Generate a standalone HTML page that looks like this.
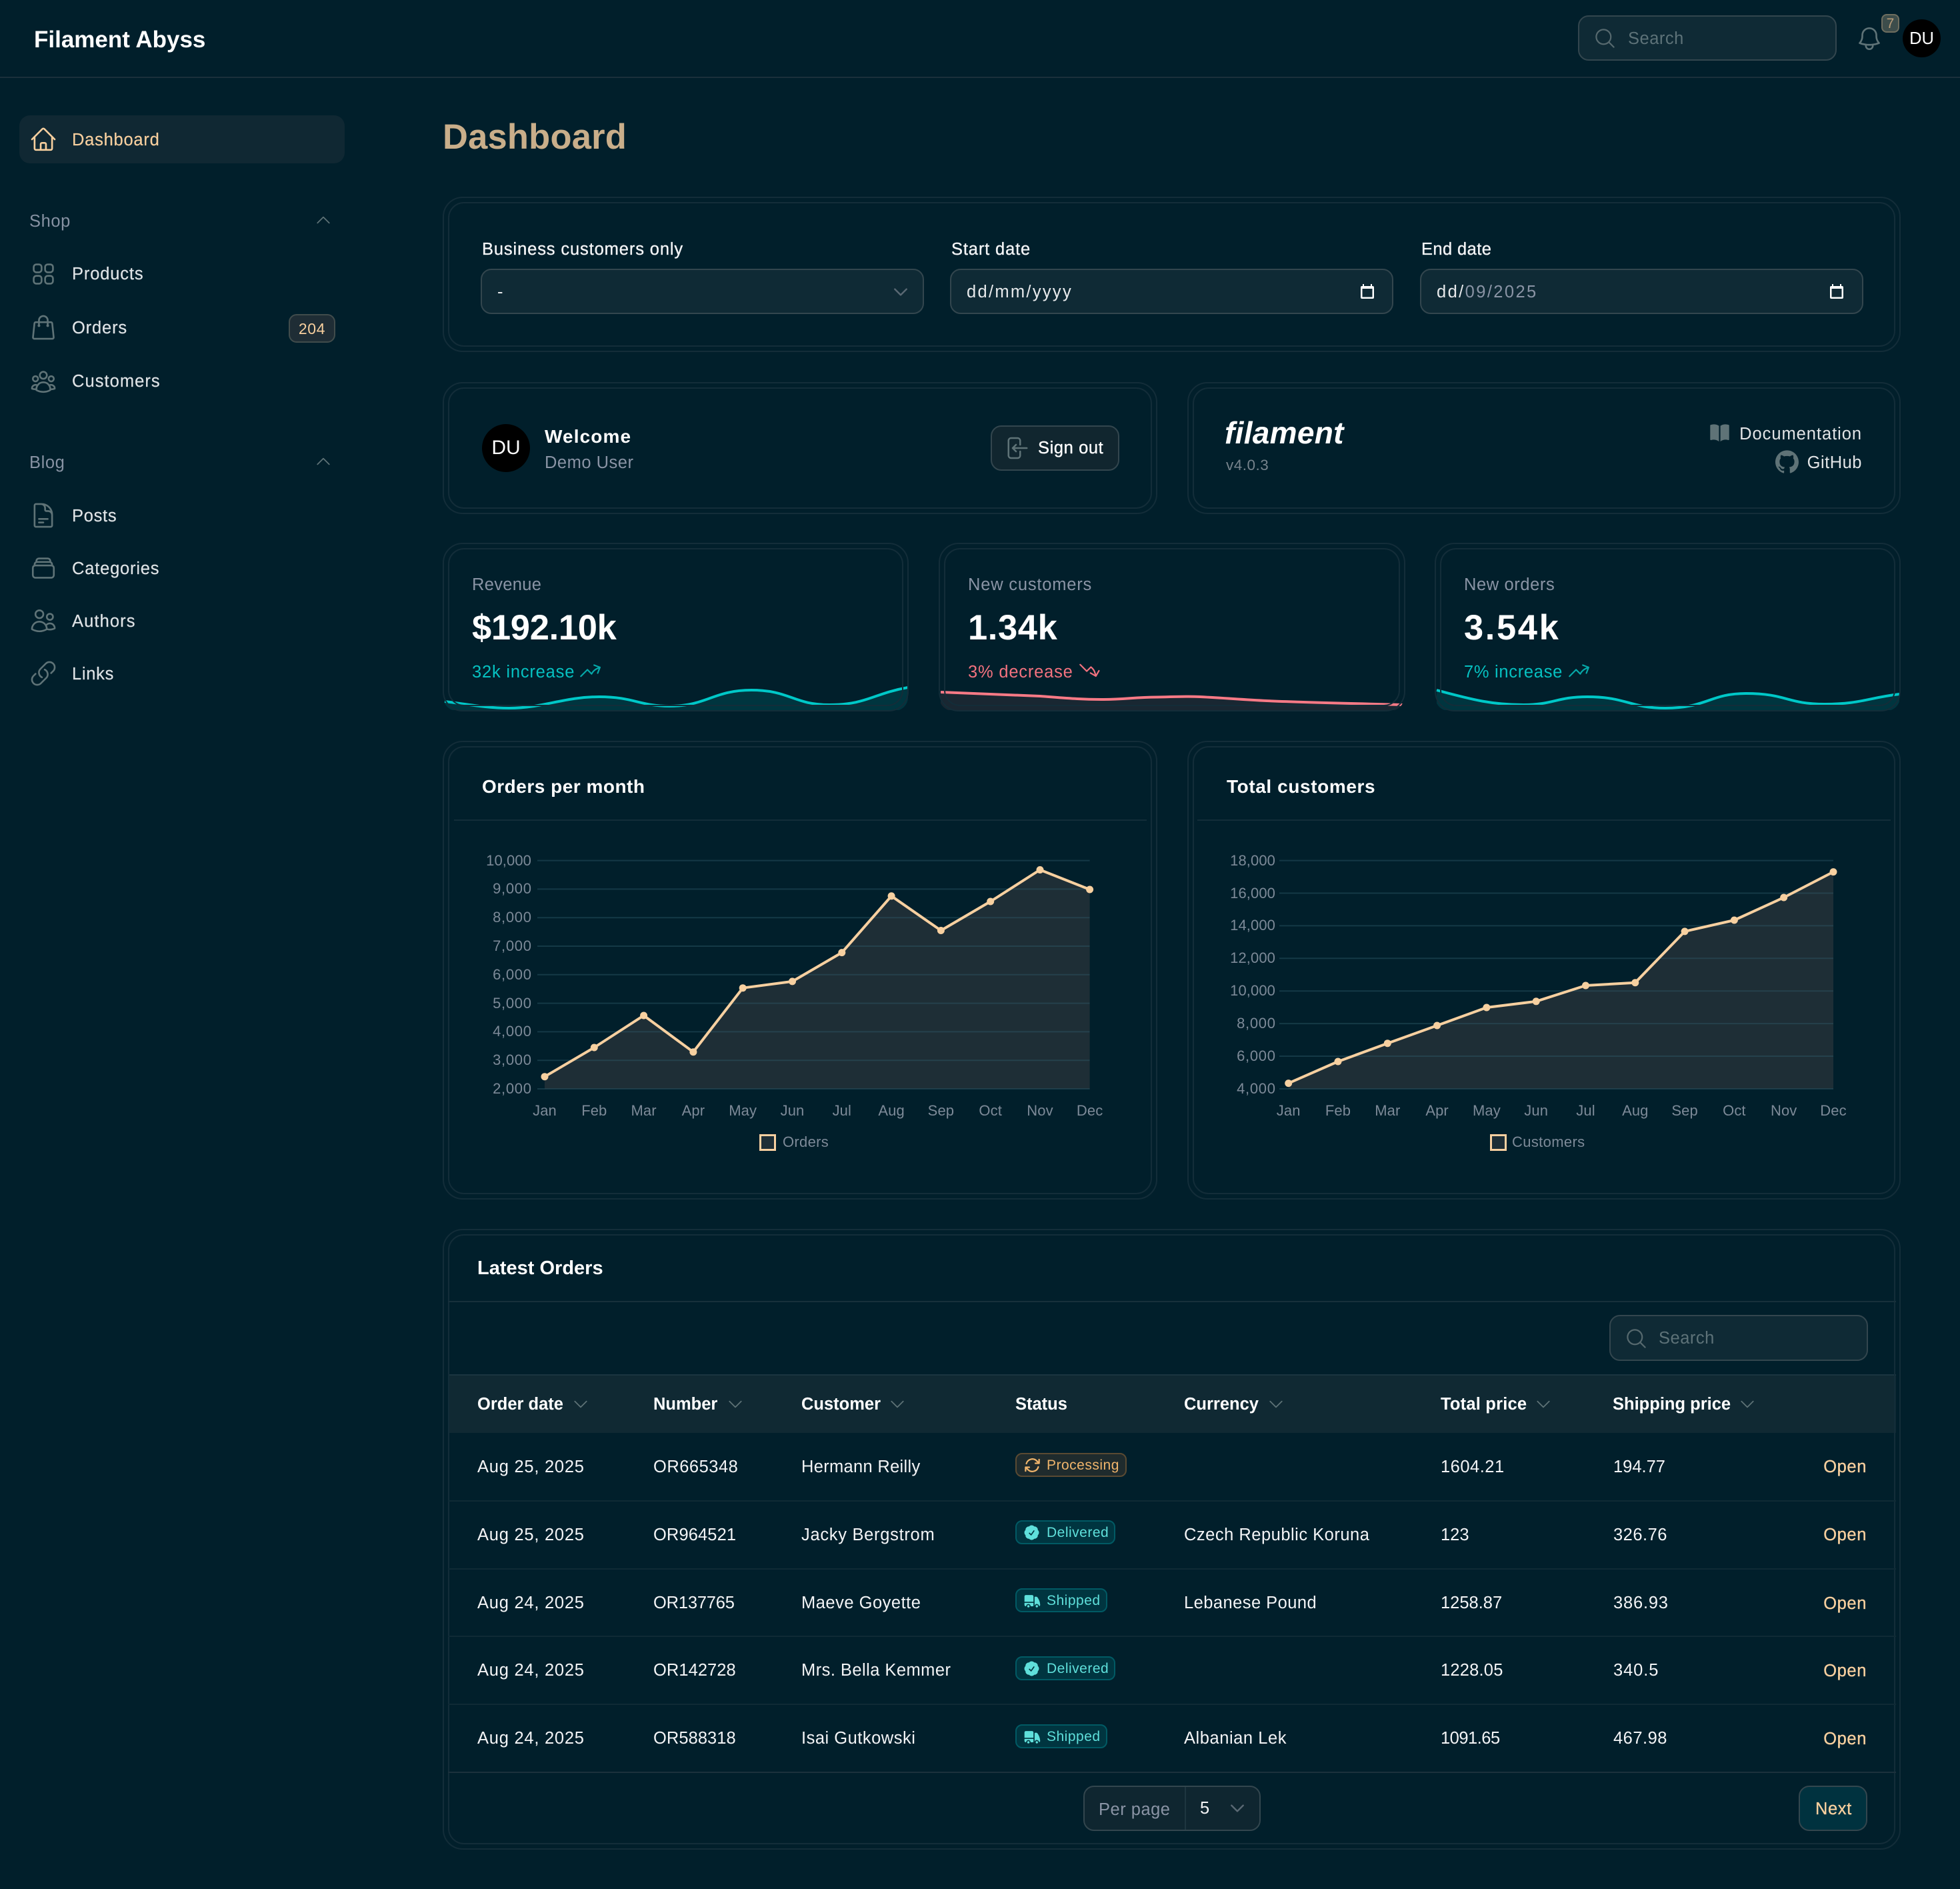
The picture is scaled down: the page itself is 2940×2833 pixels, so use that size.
<!DOCTYPE html>
<html lang="en"><head><meta charset="utf-8"><title>Dashboard - Filament Abyss</title>
<style>
*{box-sizing:border-box}
html,body{margin:0;padding:0;background:#011f2b}
body{position:relative;width:2940px;height:2833px;overflow:hidden;font-family:"Liberation Sans",Arial,sans-serif;color:#f3f4f6}
.t{position:absolute;line-height:0;white-space:nowrap;font-size:25.5px;letter-spacing:.5px;color:#f3f4f6;margin-top:1px}
.b{font-weight:700;letter-spacing:0;color:#fff}
.m{-webkit-text-stroke:.35px currentColor}
.nav{left:108px;color:#dfe3e6;letter-spacing:.85px;-webkit-text-stroke:.2px currentColor}
.sec{left:44px;color:#8792a3;letter-spacing:.6px}
.mut{color:#8a94a5}
.pe{color:#f7cf9e}
.ax{font-size:22px;letter-spacing:.1px;color:#7d8a98}
.ay{letter-spacing:.7px}
.rr{transform:translateX(-100%)}
.cc{transform:translateX(-50%)}
.box{position:absolute;border:2px solid #33464e;background:#0f2a35;border-radius:16px}
.card{position:absolute;border:2px solid #132d39;border-radius:30px}
.card i{position:absolute;inset:6px;border:2px solid #132d39;border-radius:24px;display:block}
.ln{position:absolute;height:2px;background:#16303b}
svg.ic{position:absolute;fill:none;stroke:#5f7377;stroke-width:1.5;stroke-linecap:round;stroke-linejoin:round;overflow:visible}
svg.sf{position:absolute;fill:#5f7377}
.bd{position:absolute;height:36px;border-radius:10px;border:2px solid #015a64;background:#003540}
.bt{left:1570px;font-size:21px;letter-spacing:.5px;color:#5fe0db}
.ch{stroke:#4f6468;stroke-width:2}
</style></head><body>

<!-- header -->
<span class="t b" style="left:51px;top:59px;font-size:35px">Filament Abyss</span>
<div class="ln" style="left:0;top:115px;width:2940px;background:#1b303b"></div>
<div class="box" style="left:2367px;top:23px;width:388px;height:68px"></div>
<svg class="ic" style="left:2390px;top:40px;stroke:#56696e" width="35" height="35" viewBox="0 0 24 24"><path d="m21 21-5.197-5.197m0 0A7.5 7.5 0 1 0 5.196 5.196a7.5 7.5 0 0 0 10.607 10.607Z"/></svg>
<span class="t" style="left:2442px;top:57px;color:#5d7278">Search</span>
<svg class="ic" style="left:2783px;top:37px" width="42" height="42" viewBox="0 0 24 24"><path d="M14.857 17.082a23.848 23.848 0 0 0 5.454-1.31A8.967 8.967 0 0 1 18 9.75V9A6 6 0 0 0 6 9v.75a8.967 8.967 0 0 1-2.312 6.022c1.733.64 3.56 1.085 5.455 1.31m5.714 0a24.255 24.255 0 0 1-5.714 0m5.714 0a3 3 0 1 1-5.714 0"/></svg>
<div style="position:absolute;left:2822px;top:21px;width:27px;height:28px;border-radius:8px;background:#3d4d4b;border:2px solid #6f6e5f"></div>
<span class="t cc" style="left:2835.5px;top:35px;font-size:21px;letter-spacing:0;color:#b89c78">7</span>
<div style="position:absolute;left:2854px;top:29px;width:57px;height:57px;border-radius:50%;background:#000"></div>
<span class="t cc" style="left:2882.5px;top:57px;color:#fff;letter-spacing:0">DU</span>

<!-- sidebar -->
<div style="position:absolute;left:29px;top:173px;width:488px;height:72px;border-radius:16px;background:#102833"></div>
<svg class="ic" style="left:44px;top:188px;stroke:#f7cf9e" width="42" height="42" viewBox="0 0 24 24"><path d="m2.25 12 8.954-8.955c.44-.439 1.152-.439 1.591 0L21.75 12M4.5 9.75v10.125c0 .621.504 1.125 1.125 1.125H9.75v-4.875c0-.621.504-1.125 1.125-1.125h2.25c.621 0 1.125.504 1.125 1.125V21h4.125c.621 0 1.125-.504 1.125-1.125V9.75M8.25 21h8.25"/></svg>
<span class="t nav" style="top:209px;color:#f7cf9e;letter-spacing:.75px">Dashboard</span>

<span class="t sec" style="top:331px">Shop</span>
<svg class="ic ch" style="left:471px;top:316px" width="28" height="28" viewBox="0 0 24 24"><path d="m4.5 15.75 7.5-7.5 7.5 7.5"/></svg>
<svg class="ic" style="left:44px;top:390px" width="42" height="42" viewBox="0 0 24 24"><path d="M3.75 6A2.25 2.25 0 0 1 6 3.75h2.25A2.25 2.25 0 0 1 10.5 6v2.25a2.25 2.25 0 0 1-2.25 2.25H6a2.25 2.25 0 0 1-2.25-2.25V6ZM3.75 15.75A2.25 2.25 0 0 1 6 13.5h2.25a2.25 2.25 0 0 1 2.25 2.25V18a2.25 2.25 0 0 1-2.25 2.25H6A2.25 2.25 0 0 1 3.75 18v-2.25ZM13.5 6a2.25 2.25 0 0 1 2.25-2.25H18A2.25 2.25 0 0 1 20.25 6v2.25A2.25 2.25 0 0 1 18 10.5h-2.25a2.25 2.25 0 0 1-2.25-2.25V6ZM13.5 15.75a2.25 2.25 0 0 1 2.25-2.25H18a2.25 2.25 0 0 1 2.25 2.25V18A2.25 2.25 0 0 1 18 20.25h-2.25A2.25 2.25 0 0 1 13.5 18v-2.25Z"/></svg>
<span class="t nav" style="top:410px">Products</span>
<svg class="ic" style="left:44px;top:470px" width="42" height="42" viewBox="0 0 24 24"><path d="M15.75 10.5V6a3.75 3.75 0 1 0-7.5 0v4.5m11.356-1.993 1.263 12c.07.665-.45 1.243-1.119 1.243H4.25a1.125 1.125 0 0 1-1.12-1.243l1.264-12A1.125 1.125 0 0 1 5.513 7.5h12.974c.576 0 1.059.435 1.119 1.007ZM8.625 10.5a.375.375 0 1 1-.75 0 .375.375 0 0 1 .75 0Zm7.5 0a.375.375 0 1 1-.75 0 .375.375 0 0 1 .75 0Z"/></svg>
<span class="t nav" style="top:491px">Orders</span>
<div style="position:absolute;left:433px;top:471px;width:70px;height:43px;border-radius:12px;background:#1f2d35;border:2px solid #414c4c"></div>
<span class="t cc pe" style="left:468px;top:492px;font-size:23px;letter-spacing:.6px">204</span>
<svg class="ic" style="left:44px;top:551px" width="42" height="42" viewBox="0 0 24 24"><path d="M18 18.72a9.094 9.094 0 0 0 3.741-.479 3 3 0 0 0-4.682-2.72m.94 3.198.001.031c0 .225-.012.447-.037.666A11.944 11.944 0 0 1 12 21c-2.17 0-4.207-.576-5.963-1.584A6.062 6.062 0 0 1 6 18.719m12 0a5.971 5.971 0 0 0-.941-3.197m0 0A5.995 5.995 0 0 0 12 12.75a5.995 5.995 0 0 0-5.058 2.772m0 0a3 3 0 0 0-4.681 2.72 8.986 8.986 0 0 0 3.74.477m.94-3.197a5.971 5.971 0 0 0-.94 3.197M15 6.75a3 3 0 1 1-6 0 3 3 0 0 1 6 0Zm6 3a2.25 2.25 0 1 1-4.5 0 2.25 2.25 0 0 1 4.5 0Zm-13.5 0a2.25 2.25 0 1 1-4.5 0 2.25 2.25 0 0 1 4.5 0Z"/></svg>
<span class="t nav" style="top:571px;letter-spacing:1.05px">Customers</span>

<span class="t sec" style="top:693px">Blog</span>
<svg class="ic ch" style="left:471px;top:678px" width="28" height="28" viewBox="0 0 24 24"><path d="m4.5 15.75 7.5-7.5 7.5 7.5"/></svg>
<svg class="ic" style="left:44px;top:752px" width="42" height="42" viewBox="0 0 24 24"><path d="M19.5 14.25v-2.625a3.375 3.375 0 0 0-3.375-3.375h-1.5A1.125 1.125 0 0 1 13.5 7.125v-1.5a3.375 3.375 0 0 0-3.375-3.375H8.25m0 12.75h7.5m-7.5 3H12M10.5 2.25H5.625c-.621 0-1.125.504-1.125 1.125v17.25c0 .621.504 1.125 1.125 1.125h12.75c.621 0 1.125-.504 1.125-1.125V11.25a9 9 0 0 0-9-9Z"/></svg>
<span class="t nav" style="top:773px;letter-spacing:.7px">Posts</span>
<svg class="ic" style="left:44px;top:831px" width="42" height="42" viewBox="0 0 24 24"><path d="M6 6.878V6a2.25 2.25 0 0 1 2.25-2.25h7.5A2.25 2.25 0 0 1 18 6v.878m-12 0c.235-.083.487-.128.75-.128h10.5c.263 0 .515.045.75.128m-12 0A2.25 2.25 0 0 0 4.5 9v.878m13.5-3A2.25 2.25 0 0 1 19.5 9v.878m0 0a2.246 2.246 0 0 0-.75-.128H5.25c-.263 0-.515.045-.75.128m15 0A2.25 2.25 0 0 1 21 12v6a2.25 2.25 0 0 1-2.25 2.25H5.25A2.25 2.25 0 0 1 3 18v-6c0-.98.626-1.813 1.5-2.122"/></svg>
<span class="t nav" style="top:852px;letter-spacing:.8px">Categories</span>
<svg class="ic" style="left:44px;top:910px" width="42" height="42" viewBox="0 0 24 24"><path d="M15 19.128a9.38 9.38 0 0 0 2.625.372 9.337 9.337 0 0 0 4.121-.952 4.125 4.125 0 0 0-7.533-2.493M15 19.128v-.003c0-1.113-.285-2.16-.786-3.07M15 19.128v.106A12.318 12.318 0 0 1 8.624 21c-2.331 0-4.512-.645-6.374-1.766l-.001-.109a6.375 6.375 0 0 1 11.964-3.07M12 6.375a3.375 3.375 0 1 1-6.75 0 3.375 3.375 0 0 1 6.75 0Zm8.25 2.25a2.625 2.625 0 1 1-5.25 0 2.625 2.625 0 0 1 5.25 0Z"/></svg>
<span class="t nav" style="top:931px;letter-spacing:1.1px">Authors</span>
<svg class="ic" style="left:44px;top:989px" width="42" height="42" viewBox="0 0 24 24"><path d="M13.19 8.688a4.5 4.5 0 0 1 1.242 7.244l-4.5 4.5a4.5 4.5 0 0 1-6.364-6.364l1.757-1.757m13.35-.622 1.757-1.757a4.5 4.5 0 0 0-6.364-6.364l-4.5 4.5a4.5 4.5 0 0 0 1.242 7.244"/></svg>
<span class="t nav" style="top:1010px;letter-spacing:.7px">Links</span>

<!-- heading -->
<span class="t b" style="left:664px;top:205px;font-size:52.5px;letter-spacing:.2px;color:#c9ae8a">Dashboard</span>

<!-- filter card -->
<div class="card" style="left:664px;top:295px;width:2187px;height:233px"><i></i></div>
<span class="t m" style="left:723px;top:373px;letter-spacing:.87px">Business customers only</span>
<span class="t m" style="left:1427px;top:373px;letter-spacing:.85px">Start date</span>
<span class="t m" style="left:2132px;top:373px;letter-spacing:.4px">End date</span>
<div class="box" style="left:721px;top:403px;width:665px;height:68px"></div>
<span class="t" style="left:746px;top:437px;color:#e8eaec">-</span>
<svg class="ic" style="left:1337px;top:424px;stroke:#5b6974;stroke-width:2" width="28" height="28" viewBox="0 0 24 24"><path d="m19.5 8.25-7.5 7.5-7.5-7.5"/></svg>
<div class="box" style="left:1425px;top:403px;width:665px;height:68px"></div>
<span class="t" style="left:1450px;top:437px;letter-spacing:2.3px;color:#e8eaec">dd/mm/yyyy</span>
<svg style="position:absolute;left:2041px;top:426px" width="20" height="22" viewBox="0 0 20 22"><path fill="#fff" fill-rule="evenodd" d="M3 0h2v3h10V0h2v3h1a2 2 0 0 1 2 2v15a2 2 0 0 1-2 2H2a2 2 0 0 1-2-2V5a2 2 0 0 1 2-2h1ZM2.500 7v12.500h15V7Z"/></svg>
<div class="box" style="left:2130px;top:403px;width:665px;height:68px"></div>
<span class="t" style="left:2155px;top:437px;letter-spacing:2.4px;color:#e8eaec">dd/<span style="color:#8a94a5">09/2025</span></span>
<svg style="position:absolute;left:2745px;top:426px" width="20" height="22" viewBox="0 0 20 22"><path fill="#fff" fill-rule="evenodd" d="M3 0h2v3h10V0h2v3h1a2 2 0 0 1 2 2v15a2 2 0 0 1-2 2H2a2 2 0 0 1-2-2V5a2 2 0 0 1 2-2h1ZM2.500 7v12.500h15V7Z"/></svg>

<!-- welcome card -->
<div class="card" style="left:664px;top:573px;width:1072px;height:198px"><i></i></div>
<div style="position:absolute;left:723px;top:636px;width:72px;height:72px;border-radius:50%;background:#000"></div>
<span class="t cc" style="left:759px;top:671px;font-size:30px;letter-spacing:0;color:#fff">DU</span>
<span class="t b" style="left:817px;top:654px;font-size:28px;letter-spacing:1.1px">Welcome</span>
<span class="t mut" style="left:817px;top:693px;letter-spacing:.5px">Demo User</span>
<div class="box" style="left:1486px;top:638px;width:193px;height:68px;background:#11262f"></div>
<svg class="ic" style="left:1504px;top:652px" width="40" height="40" viewBox="0 0 24 24"><path d="M15.750 9V5.250A2.250 2.250 0 0 0 13.500 3h-6a2.250 2.250 0 0 0-2.250 2.250v13.500A2.250 2.250 0 0 0 7.500 21h6a2.250 2.250 0 0 0 2.250-2.250V15M12 9l-3 3m0 0 3 3m-3-3h12.750"/></svg>
<span class="t m" style="left:1557px;top:671px;color:#fff;letter-spacing:.6px">Sign out</span>

<!-- filament card -->
<div class="card" style="left:1781px;top:573px;width:1070px;height:198px"><i></i></div>
<span class="t" style="left:1837px;top:648px;font-size:46px;font-weight:700;font-style:italic;letter-spacing:.3px;color:#fff">filament</span>
<span class="t" style="left:1839px;top:697px;font-size:22.5px;color:#76838c;letter-spacing:.5px">v4.0.3</span>
<svg class="sf" style="left:2562px;top:632px" width="35" height="35" viewBox="0 0 24 24"><path d="M11.250 4.533A9.707 9.707 0 0 0 6 3a9.735 9.735 0 0 0-3.250.555.750.750 0 0 0-.5.707v14.250a.750.750 0 0 0 1 .707A8.237 8.237 0 0 1 6 18.750c1.995 0 3.823.707 5.250 1.886V4.533ZM12.750 20.636A8.214 8.214 0 0 1 18 18.750c.966 0 1.890.166 2.750.47a.750.750 0 0 0 1-.708V4.262a.750.750 0 0 0-.5-.707A9.735 9.735 0 0 0 18 3a9.707 9.707 0 0 0-5.250 1.533v16.103Z"/></svg>
<span class="t rr" style="left:2793px;top:650px;color:#e3e5e7;letter-spacing:.95px">Documentation</span>
<svg class="sf" style="left:2663px;top:675px" width="35" height="35" viewBox="0 0 24 24"><path d="M12 .297c-6.630 0-12 5.373-12 12 0 5.303 3.438 9.800 8.205 11.385.6.113.820-.258.820-.577 0-.285-.010-1.040-.015-2.040-3.338.724-4.042-1.610-4.042-1.610C4.422 18.070 3.633 17.700 3.633 17.700c-1.087-.744.084-.729.084-.729 1.205.084 1.838 1.236 1.838 1.236 1.070 1.835 2.809 1.305 3.495.998.108-.776.417-1.305.760-1.605-2.665-.3-5.466-1.332-5.466-5.930 0-1.310.465-2.380 1.235-3.220-.135-.303-.54-1.523.105-3.176 0 0 1.005-.322 3.300 1.230.960-.267 1.980-.399 3-.405 1.020.006 2.040.138 3 .405 2.280-1.552 3.285-1.230 3.285-1.230.645 1.653.24 2.873.120 3.176.765.840 1.230 1.910 1.230 3.220 0 4.610-2.805 5.625-5.475 5.920.42.36.810 1.096.810 2.220 0 1.606-.015 2.896-.015 3.286 0 .315.21.69.825.57C20.565 22.092 24 17.592 24 12.297c0-6.627-5.373-12-12-12"/></svg>
<span class="t rr" style="left:2793px;top:693px;color:#e3e5e7;letter-spacing:.5px">GitHub</span>

<!-- stats / charts layer -->
<svg style="position:absolute;left:0;top:0" width="2940" height="2833" viewBox="0 0 2940 2833">
<defs>
<clipPath id="c1"><rect x="665" y="815" width="697" height="251" rx="20"/></clipPath>
<clipPath id="c2"><rect x="1409" y="815" width="697" height="251" rx="20"/></clipPath>
<clipPath id="c3"><rect x="2153" y="815" width="697" height="251" rx="20"/></clipPath>
</defs>
<g clip-path="url(#c1)">
<path fill="rgba(0,190,190,.14)" d="M667 1052C700 1056 730 1062 764 1062C815 1062 845 1045 899 1045C950 1045 960 1059 1004 1059C1060 1059 1070 1035 1127 1035C1185 1035 1190 1057 1244 1057C1300 1057 1310 1040 1362 1031V1065H667Z"/>
<path fill="none" stroke="#00c8c8" stroke-width="4" d="M667 1052C700 1056 730 1062 764 1062C815 1062 845 1045 899 1045C950 1045 960 1059 1004 1059C1060 1059 1070 1035 1127 1035C1185 1035 1190 1057 1244 1057C1300 1057 1310 1040 1362 1031"/>
</g>
<g clip-path="url(#c2)">
<path fill="rgba(248,113,113,.1)" d="M1411 1038C1470 1040 1520 1042 1560 1044C1600 1047 1620 1049 1655 1049C1690 1049 1700 1045.500 1736 1045.500C1770 1045 1780 1044 1800 1045C1840 1047 1860 1049 1900 1051C1970 1054 2040 1055 2104 1057V1065H1411Z"/>
<path fill="none" stroke="#f97a86" stroke-width="4" d="M1411 1038C1470 1040 1520 1042 1560 1044C1600 1047 1620 1049 1655 1049C1690 1049 1700 1045.500 1736 1045.500C1770 1045 1780 1044 1800 1045C1840 1047 1860 1049 1900 1051C1970 1054 2040 1055 2104 1057"/>
</g>
<g clip-path="url(#c3)">
<path fill="rgba(0,190,190,.14)" d="M2155 1035C2210 1050 2240 1057 2285 1057C2330 1057 2335 1045 2381 1045C2440 1045 2445 1062 2498 1062C2560 1062 2565 1040 2619 1040C2680 1040 2680 1056 2737 1056C2790 1056 2800 1047 2849 1041V1065H2155Z"/>
<path fill="none" stroke="#00c8c8" stroke-width="4" d="M2155 1035C2210 1050 2240 1057 2285 1057C2330 1057 2335 1045 2381 1045C2440 1045 2445 1062 2498 1062C2560 1062 2565 1040 2619 1040C2680 1040 2680 1056 2737 1056C2790 1056 2800 1047 2849 1041"/>
</g>

<!-- chart 1 -->
<path fill="#1e2e36" d="M817 1614.700L891.300 1571L965.600 1523L1039.900 1577.700L1114.200 1481.700L1188.500 1471.900L1262.800 1428.600L1337.100 1343.800L1411.400 1395.500L1485.700 1352L1560 1304.500L1634.600 1334V1633H817Z"/>
<g stroke="rgba(48,92,108,.42)" stroke-width="2">
<path d="M806 1290.600H1634.600M806 1333.400H1634.600M806 1376.200H1634.600M806 1419H1634.600M806 1461.800H1634.600M806 1504.600H1634.600M806 1547.400H1634.600M806 1590.200H1634.600M806 1633H1634.600"/>
</g>
<path fill="none" stroke="#f7d0a0" stroke-width="4" stroke-linejoin="round" d="M817 1614.700L891.300 1571L965.600 1523L1039.900 1577.700L1114.200 1481.700L1188.500 1471.900L1262.800 1428.600L1337.100 1343.800L1411.400 1395.500L1485.700 1352L1560 1304.500L1634.600 1334"/>
<g fill="#f7d0a0"><circle cx="817" cy="1614.700" r="5.500"/><circle cx="891.300" cy="1571" r="5.500"/><circle cx="965.600" cy="1523" r="5.500"/><circle cx="1039.900" cy="1577.700" r="5.500"/><circle cx="1114.200" cy="1481.700" r="5.500"/><circle cx="1188.500" cy="1471.900" r="5.500"/><circle cx="1262.800" cy="1428.600" r="5.500"/><circle cx="1337.100" cy="1343.800" r="5.500"/><circle cx="1411.400" cy="1395.500" r="5.500"/><circle cx="1485.700" cy="1352" r="5.500"/><circle cx="1560" cy="1304.500" r="5.500"/><circle cx="1634.600" cy="1334" r="5.500"/></g>
<rect x="1140.500" y="1702.500" width="22" height="22" fill="#1e2e36" stroke="#f7d0a0" stroke-width="3"/>

<!-- chart 2 -->
<path fill="#1e2e36" d="M1932.700 1624.600L2007 1592L2081.300 1564.700L2155.600 1538L2229.900 1511L2304.200 1501.800L2378.500 1478L2452.800 1473.700L2527.100 1396.900L2601.400 1380L2675.700 1346L2750 1307.600V1633H1932.700Z"/>
<g stroke="rgba(48,92,108,.42)" stroke-width="2">
<path d="M1919 1290.600H2750M1919 1339.500H2750M1919 1388.400H2750M1919 1437.300H2750M1919 1486.200H2750M1919 1535.100H2750M1919 1584H2750M1919 1633H2750"/>
</g>
<path fill="none" stroke="#f7d0a0" stroke-width="4" stroke-linejoin="round" d="M1932.700 1624.600L2007 1592L2081.300 1564.700L2155.600 1538L2229.900 1511L2304.200 1501.800L2378.500 1478L2452.800 1473.700L2527.100 1396.900L2601.400 1380L2675.700 1346L2750 1307.600"/>
<g fill="#f7d0a0"><circle cx="1932.700" cy="1624.600" r="5.500"/><circle cx="2007" cy="1592" r="5.500"/><circle cx="2081.300" cy="1564.700" r="5.500"/><circle cx="2155.600" cy="1538" r="5.500"/><circle cx="2229.900" cy="1511" r="5.500"/><circle cx="2304.200" cy="1501.800" r="5.500"/><circle cx="2378.500" cy="1478" r="5.500"/><circle cx="2452.800" cy="1473.700" r="5.500"/><circle cx="2527.100" cy="1396.900" r="5.500"/><circle cx="2601.400" cy="1380" r="5.500"/><circle cx="2675.700" cy="1346" r="5.500"/><circle cx="2750" cy="1307.600" r="5.500"/></g>
<rect x="2236.500" y="1702.500" width="22" height="22" fill="#1e2e36" stroke="#f7d0a0" stroke-width="3"/>
</svg>

<div class="card" style="left:664px;top:814px;width:699px;height:253px"><i></i></div>
<span class="t mut" style="left:708px;top:876px;letter-spacing:.3px">Revenue</span>
<span class="t b" style="left:708px;top:941px;font-size:52.5px;letter-spacing:-.3px">$192.10k</span>
<span class="t" style="left:708px;top:1007px;color:#06c1c1;letter-spacing:.8px">32k increase</span>
<svg class="ic" style="left:868px;top:988px;stroke:#06a9a9" width="35" height="35" viewBox="0 0 24 24"><path d="M2.250 18 9 11.250l4.306 4.306a11.950 11.950 0 0 1 5.814-5.518l2.740-1.220m0 0-5.940-2.281m5.940 2.280-2.280 5.941"/></svg>
<div class="card" style="left:1408px;top:814px;width:700px;height:253px"><i></i></div>
<span class="t mut" style="left:1452px;top:876px;letter-spacing:.8px">New customers</span>
<span class="t b" style="left:1452px;top:941px;font-size:52.5px;letter-spacing:.6px">1.34k</span>
<span class="t" style="left:1452px;top:1007px;color:#f4727f;letter-spacing:.8px">3% decrease</span>
<svg class="ic" style="left:1617px;top:988px;stroke:#f4727f" width="35" height="35" viewBox="0 0 24 24"><path d="M2.250 6 9 12.750l4.286-4.286a11.948 11.948 0 0 1 4.306 6.430l.776 2.898m0 0 3.182-5.511m-3.182 5.510-5.511-3.181"/></svg>
<div class="card" style="left:2152px;top:814px;width:699px;height:253px"><i></i></div>
<span class="t mut" style="left:2196px;top:876px;letter-spacing:.6px">New orders</span>
<span class="t b" style="left:2196px;top:941px;font-size:52.5px;letter-spacing:2.6px">3.54k</span>
<span class="t" style="left:2196px;top:1007px;color:#06c1c1;letter-spacing:.7px">7% increase</span>
<svg class="ic" style="left:2351px;top:988px;stroke:#06a9a9" width="35" height="35" viewBox="0 0 24 24"><path d="M2.250 18 9 11.250l4.306 4.306a11.950 11.950 0 0 1 5.814-5.518l2.740-1.220m0 0-5.940-2.281m5.940 2.280-2.280 5.941"/></svg>

<!-- chart cards -->
<div class="card" style="left:664px;top:1111px;width:1072px;height:688px"><i></i></div>
<span class="t b" style="left:723px;top:1179px;font-size:28px;letter-spacing:.5px">Orders per month</span>
<div class="ln" style="left:681px;top:1229px;width:1039px;background:#132d39"></div>
<span class="t ax rr" style="left:797px;top:1290px">10,000</span>
<span class="t ax ay rr" style="left:797.7px;top:1332.400px">9,000</span>
<span class="t ax ay rr" style="left:797.7px;top:1375.200px">8,000</span>
<span class="t ax ay rr" style="left:797.7px;top:1418px">7,000</span>
<span class="t ax ay rr" style="left:797.7px;top:1460.800px">6,000</span>
<span class="t ax ay rr" style="left:797.7px;top:1503.600px">5,000</span>
<span class="t ax ay rr" style="left:797.7px;top:1546.400px">4,000</span>
<span class="t ax ay rr" style="left:797.7px;top:1589.200px">3,000</span>
<span class="t ax ay rr" style="left:797.7px;top:1632px">2,000</span>
<span class="t ax cc" style="left:817px;top:1665px">Jan</span>
<span class="t ax cc" style="left:891.300px;top:1665px">Feb</span>
<span class="t ax cc" style="left:965.600px;top:1665px">Mar</span>
<span class="t ax cc" style="left:1039.900px;top:1665px">Apr</span>
<span class="t ax cc" style="left:1114.200px;top:1665px">May</span>
<span class="t ax cc" style="left:1188.500px;top:1665px">Jun</span>
<span class="t ax cc" style="left:1262.800px;top:1665px">Jul</span>
<span class="t ax cc" style="left:1337.100px;top:1665px">Aug</span>
<span class="t ax cc" style="left:1411.400px;top:1665px">Sep</span>
<span class="t ax cc" style="left:1485.700px;top:1665px">Oct</span>
<span class="t ax cc" style="left:1560px;top:1665px">Nov</span>
<span class="t ax cc" style="left:1634.600px;top:1665px">Dec</span>
<span class="t ax" style="left:1174px;top:1711.500px;letter-spacing:.3px">Orders</span>

<div class="card" style="left:1781px;top:1111px;width:1070px;height:688px"><i></i></div>
<span class="t b" style="left:1840px;top:1179px;font-size:28px;letter-spacing:.6px">Total customers</span>
<div class="ln" style="left:1796px;top:1229px;width:1040px;background:#132d39"></div>
<span class="t ax rr" style="left:1913px;top:1290px">18,000</span>
<span class="t ax rr" style="left:1913px;top:1338.500px">16,000</span>
<span class="t ax rr" style="left:1913px;top:1387.400px">14,000</span>
<span class="t ax rr" style="left:1913px;top:1436.300px">12,000</span>
<span class="t ax rr" style="left:1913px;top:1485.200px">10,000</span>
<span class="t ax ay rr" style="left:1913.7px;top:1534.100px">8,000</span>
<span class="t ax ay rr" style="left:1913.7px;top:1583px">6,000</span>
<span class="t ax ay rr" style="left:1913.7px;top:1632px">4,000</span>
<span class="t ax cc" style="left:1932.700px;top:1665px">Jan</span>
<span class="t ax cc" style="left:2007px;top:1665px">Feb</span>
<span class="t ax cc" style="left:2081.300px;top:1665px">Mar</span>
<span class="t ax cc" style="left:2155.600px;top:1665px">Apr</span>
<span class="t ax cc" style="left:2229.900px;top:1665px">May</span>
<span class="t ax cc" style="left:2304.200px;top:1665px">Jun</span>
<span class="t ax cc" style="left:2378.500px;top:1665px">Jul</span>
<span class="t ax cc" style="left:2452.800px;top:1665px">Aug</span>
<span class="t ax cc" style="left:2527.100px;top:1665px">Sep</span>
<span class="t ax cc" style="left:2601.400px;top:1665px">Oct</span>
<span class="t ax cc" style="left:2675.700px;top:1665px">Nov</span>
<span class="t ax cc" style="left:2750px;top:1665px">Dec</span>
<span class="t ax" style="left:2268px;top:1711.500px;letter-spacing:.35px">Customers</span>

<!-- table card -->
<div style="position:absolute;left:672px;top:2061px;width:2172px;height:88px;background:#102933;border-top:2px solid #1b3540"></div>
<div class="card" style="left:664px;top:1843px;width:2187px;height:931px"><i></i></div>
<span class="t b" style="left:716px;top:1901px;font-size:29px;letter-spacing:0">Latest Orders</span>
<div class="ln" style="left:672px;top:1951px;width:2172px;background:#17303b"></div>
<div class="box" style="left:2414px;top:1972px;width:388px;height:69px"></div>
<svg class="ic" style="left:2437px;top:1990px;stroke:#56696e" width="35" height="35" viewBox="0 0 24 24"><path d="m21 21-5.197-5.197m0 0A7.500 7.500 0 1 0 5.196 5.196a7.500 7.500 0 0 0 10.607 10.607Z"/></svg>
<span class="t" style="left:2488px;top:2006px;color:#5d7278">Search</span>

<span class="t b" style="left:716px;top:2105px;font-size:25.5px">Order date</span>
<span class="t b" style="left:980px;top:2105px;font-size:25.5px">Number</span>
<span class="t b" style="left:1202px;top:2105px;font-size:25.5px">Customer</span>
<span class="t b" style="left:1523px;top:2105px;font-size:25.5px">Status</span>
<span class="t b" style="left:1776px;top:2105px;font-size:25.5px">Currency</span>
<span class="t b" style="left:2161px;top:2105px;font-size:25.5px;letter-spacing:.2px">Total price</span>
<span class="t b" style="left:2419px;top:2105px;font-size:25.5px">Shipping price</span>
<svg class="ic ch" style="left:857px;top:2092px" width="28" height="28" viewBox="0 0 24 24"><path d="m19.500 8.250-7.500 7.500-7.500-7.500"/></svg>
<svg class="ic ch" style="left:1089px;top:2092px" width="28" height="28" viewBox="0 0 24 24"><path d="m19.500 8.250-7.500 7.500-7.500-7.500"/></svg>
<svg class="ic ch" style="left:1332px;top:2092px" width="28" height="28" viewBox="0 0 24 24"><path d="m19.500 8.250-7.500 7.500-7.500-7.500"/></svg>
<svg class="ic ch" style="left:1900px;top:2092px" width="28" height="28" viewBox="0 0 24 24"><path d="m19.500 8.250-7.500 7.500-7.500-7.500"/></svg>
<svg class="ic ch" style="left:2301px;top:2092px" width="28" height="28" viewBox="0 0 24 24"><path d="m19.500 8.250-7.500 7.500-7.500-7.500"/></svg>
<svg class="ic ch" style="left:2607px;top:2092px" width="28" height="28" viewBox="0 0 24 24"><path d="m19.500 8.250-7.500 7.500-7.500-7.500"/></svg>

<div class="ln" style="left:672px;top:2250px;width:2172px;background:#0f2a35"></div>
<div class="ln" style="left:672px;top:2352px;width:2172px;background:#0f2a35"></div>
<div class="ln" style="left:672px;top:2453px;width:2172px;background:#0f2a35"></div>
<div class="ln" style="left:672px;top:2555px;width:2172px;background:#0f2a35"></div>
<div class="ln" style="left:672px;top:2657px;width:2172px;background:#1b313c"></div>

<!-- row 1 -->
<span class="t" style="left:716px;top:2199px;letter-spacing:.75px">Aug 25, 2025</span>
<span class="t" style="left:980px;top:2199px">OR665348</span>
<span class="t" style="left:1202px;top:2199px;letter-spacing:.3px">Hermann Reilly</span>
<div class="bd" style="left:1523px;top:2179px;width:167px;background:#1f2b2d;border-color:#5a4a32"></div>
<svg class="ic" style="left:1535px;top:2184px;stroke:#f0b56c;stroke-width:2" width="27" height="27" viewBox="0 0 24 24"><path d="M16.023 9.348h4.992v-.001M2.985 19.644v-4.992m0 0h4.992m-4.993 0 3.181 3.183a8.250 8.250 0 0 0 13.803-3.700M4.031 9.865a8.250 8.250 0 0 1 13.803-3.700l3.181 3.182m0-4.991v4.990"/></svg>
<span class="t bt" style="top:2197px;color:#f0b56c">Processing</span>
<span class="t" style="left:2161px;top:2199px">1604.21</span>
<span class="t" style="left:2420px;top:2199px;letter-spacing:0">194.77</span>
<span class="t rr pe m" style="left:2800px;top:2199px;letter-spacing:.6px">Open</span>

<!-- row 2 -->
<span class="t" style="left:716px;top:2301px;letter-spacing:.75px">Aug 25, 2025</span>
<span class="t" style="left:980px;top:2301px;letter-spacing:.1px">OR964521</span>
<span class="t" style="left:1202px;top:2301px;letter-spacing:.7px">Jacky Bergstrom</span>
<div class="bd" style="left:1523px;top:2280px;width:150px"></div>
<svg class="sf" style="left:1534px;top:2285px;fill:#5fe0db" width="27" height="27" viewBox="0 0 24 24"><path fill-rule="evenodd" d="M8.603 3.799A4.490 4.490 0 0 1 12 2.250c1.357 0 2.573.6 3.397 1.549a4.490 4.490 0 0 1 3.498 1.307 4.491 4.491 0 0 1 1.307 3.497A4.490 4.490 0 0 1 21.750 12a4.490 4.490 0 0 1-1.549 3.397 4.491 4.491 0 0 1-1.307 3.497 4.491 4.491 0 0 1-3.497 1.307A4.490 4.490 0 0 1 12 21.750a4.490 4.490 0 0 1-3.397-1.549 4.490 4.490 0 0 1-3.498-1.306 4.491 4.491 0 0 1-1.307-3.498A4.490 4.490 0 0 1 2.250 12c0-1.357.6-2.573 1.549-3.397a4.490 4.490 0 0 1 1.307-3.497 4.490 4.490 0 0 1 3.497-1.307Zm7.007 6.387a.750.750 0 1 0-1.220-.872l-3.236 4.530L9.530 12.220a.750.750 0 0 0-1.060 1.060l2.250 2.250a.750.750 0 0 0 1.140-.094l3.750-5.250Z"/></svg>
<span class="t bt" style="top:2298px">Delivered</span>
<span class="t" style="left:1776px;top:2301px;letter-spacing:.5px">Czech Republic Koruna</span>
<span class="t" style="left:2161px;top:2301px;letter-spacing:0">123</span>
<span class="t" style="left:2420px;top:2301px">326.76</span>
<span class="t rr pe m" style="left:2800px;top:2301px;letter-spacing:.6px">Open</span>

<!-- row 3 -->
<span class="t" style="left:716px;top:2403px;letter-spacing:.75px">Aug 24, 2025</span>
<span class="t" style="left:980px;top:2403px;letter-spacing:-.2px">OR137765</span>
<span class="t" style="left:1202px;top:2403px;letter-spacing:.5px">Maeve Goyette</span>
<div class="bd" style="left:1523px;top:2382px;width:138px"></div>
<svg class="sf" style="left:1535px;top:2387px;fill:#5fe0db" width="27" height="27" viewBox="0 0 24 24"><path d="M3.375 4.500C2.339 4.500 1.500 5.340 1.500 6.375V13.500h12V6.375c0-1.036-.84-1.875-1.875-1.875h-8.250ZM13.500 15h-12v2.625c0 1.035.84 1.875 1.875 1.875h.375a3 3 0 1 1 6 0h3a.750.750 0 0 0 .75-.75V15ZM8.250 19.500a1.500 1.500 0 1 0-3 0 1.500 1.500 0 0 0 3 0ZM15.750 6.750a.750.750 0 0 0-.75.75v11.250c0 .087.015.17.042.248a3 3 0 0 1 5.958.464c.853-.175 1.522-.935 1.464-1.883a18.659 18.659 0 0 0-3.732-10.104 1.837 1.837 0 0 0-1.470-.725H15.750ZM19.500 19.500a1.500 1.500 0 1 0-3 0 1.500 1.500 0 0 0 3 0Z"/></svg>
<span class="t bt" style="top:2400px">Shipped</span>
<span class="t" style="left:1776px;top:2403px;letter-spacing:.45px">Lebanese Pound</span>
<span class="t" style="left:2161px;top:2403px;letter-spacing:0">1258.87</span>
<span class="t" style="left:2420px;top:2403px;letter-spacing:.8px">386.93</span>
<span class="t rr pe m" style="left:2800px;top:2404px;letter-spacing:.6px">Open</span>

<!-- row 4 -->
<span class="t" style="left:716px;top:2504px;letter-spacing:.75px">Aug 24, 2025</span>
<span class="t" style="left:980px;top:2504px;letter-spacing:.05px">OR142728</span>
<span class="t" style="left:1202px;top:2504px;letter-spacing:.45px">Mrs. Bella Kemmer</span>
<div class="bd" style="left:1523px;top:2484px;width:150px"></div>
<svg class="sf" style="left:1534px;top:2489px;fill:#5fe0db" width="27" height="27" viewBox="0 0 24 24"><path fill-rule="evenodd" d="M8.603 3.799A4.490 4.490 0 0 1 12 2.250c1.357 0 2.573.6 3.397 1.549a4.490 4.490 0 0 1 3.498 1.307 4.491 4.491 0 0 1 1.307 3.497A4.490 4.490 0 0 1 21.750 12a4.490 4.490 0 0 1-1.549 3.397 4.491 4.491 0 0 1-1.307 3.497 4.491 4.491 0 0 1-3.497 1.307A4.490 4.490 0 0 1 12 21.750a4.490 4.490 0 0 1-3.397-1.549 4.490 4.490 0 0 1-3.498-1.306 4.491 4.491 0 0 1-1.307-3.498A4.490 4.490 0 0 1 2.250 12c0-1.357.6-2.573 1.549-3.397a4.490 4.490 0 0 1 1.307-3.497 4.490 4.490 0 0 1 3.497-1.307Zm7.007 6.387a.750.750 0 1 0-1.220-.872l-3.236 4.530L9.530 12.220a.750.750 0 0 0-1.060 1.060l2.250 2.250a.750.750 0 0 0 1.140-.094l3.750-5.250Z"/></svg>
<span class="t bt" style="top:2502px">Delivered</span>
<span class="t" style="left:2161px;top:2504px;letter-spacing:.2px">1228.05</span>
<span class="t" style="left:2420px;top:2504px;letter-spacing:.9px">340.5</span>
<span class="t rr pe m" style="left:2800px;top:2505px;letter-spacing:.6px">Open</span>

<!-- row 5 -->
<span class="t" style="left:716px;top:2606px;letter-spacing:.75px">Aug 24, 2025</span>
<span class="t" style="left:980px;top:2606px;letter-spacing:.05px">OR588318</span>
<span class="t" style="left:1202px;top:2606px;letter-spacing:.5px">Isai Gutkowski</span>
<div class="bd" style="left:1523px;top:2586px;width:138px"></div>
<svg class="sf" style="left:1535px;top:2591px;fill:#5fe0db" width="27" height="27" viewBox="0 0 24 24"><path d="M3.375 4.500C2.339 4.500 1.500 5.340 1.500 6.375V13.500h12V6.375c0-1.036-.84-1.875-1.875-1.875h-8.250ZM13.500 15h-12v2.625c0 1.035.84 1.875 1.875 1.875h.375a3 3 0 1 1 6 0h3a.750.750 0 0 0 .75-.75V15ZM8.250 19.500a1.500 1.500 0 1 0-3 0 1.500 1.500 0 0 0 3 0ZM15.750 6.750a.750.750 0 0 0-.75.75v11.250c0 .087.015.17.042.248a3 3 0 0 1 5.958.464c.853-.175 1.522-.935 1.464-1.883a18.659 18.659 0 0 0-3.732-10.104 1.837 1.837 0 0 0-1.470-.725H15.750ZM19.500 19.500a1.500 1.500 0 1 0-3 0 1.500 1.500 0 0 0 3 0Z"/></svg>
<span class="t bt" style="top:2604px">Shipped</span>
<span class="t" style="left:1776px;top:2606px;letter-spacing:.55px">Albanian Lek</span>
<span class="t" style="left:2161px;top:2606px;letter-spacing:-.5px">1091.65</span>
<span class="t" style="left:2420px;top:2606px">467.98</span>
<span class="t rr pe m" style="left:2800px;top:2607px;letter-spacing:.6px">Open</span>

<!-- pagination -->
<div class="box" style="left:1625px;top:2678px;width:266px;height:68px;background:#0f2630"></div>
<div style="position:absolute;left:1777px;top:2680px;width:2px;height:64px;background:#1e3640"></div>
<span class="t mut" style="left:1648px;top:2713px;letter-spacing:.5px">Per page</span>
<span class="t" style="left:1800px;top:2711px;letter-spacing:0">5</span>
<svg class="ic" style="left:1842px;top:2698px;stroke:#5b6974;stroke-width:2" width="28" height="28" viewBox="0 0 24 24"><path d="m19.500 8.250-7.500 7.500-7.500-7.500"/></svg>
<div class="box" style="left:2698px;top:2678px;width:103px;height:68px;background:#00323f"></div>
<span class="t pe m" style="left:2723px;top:2712px;letter-spacing:.6px">Next</span>
</body></html>
